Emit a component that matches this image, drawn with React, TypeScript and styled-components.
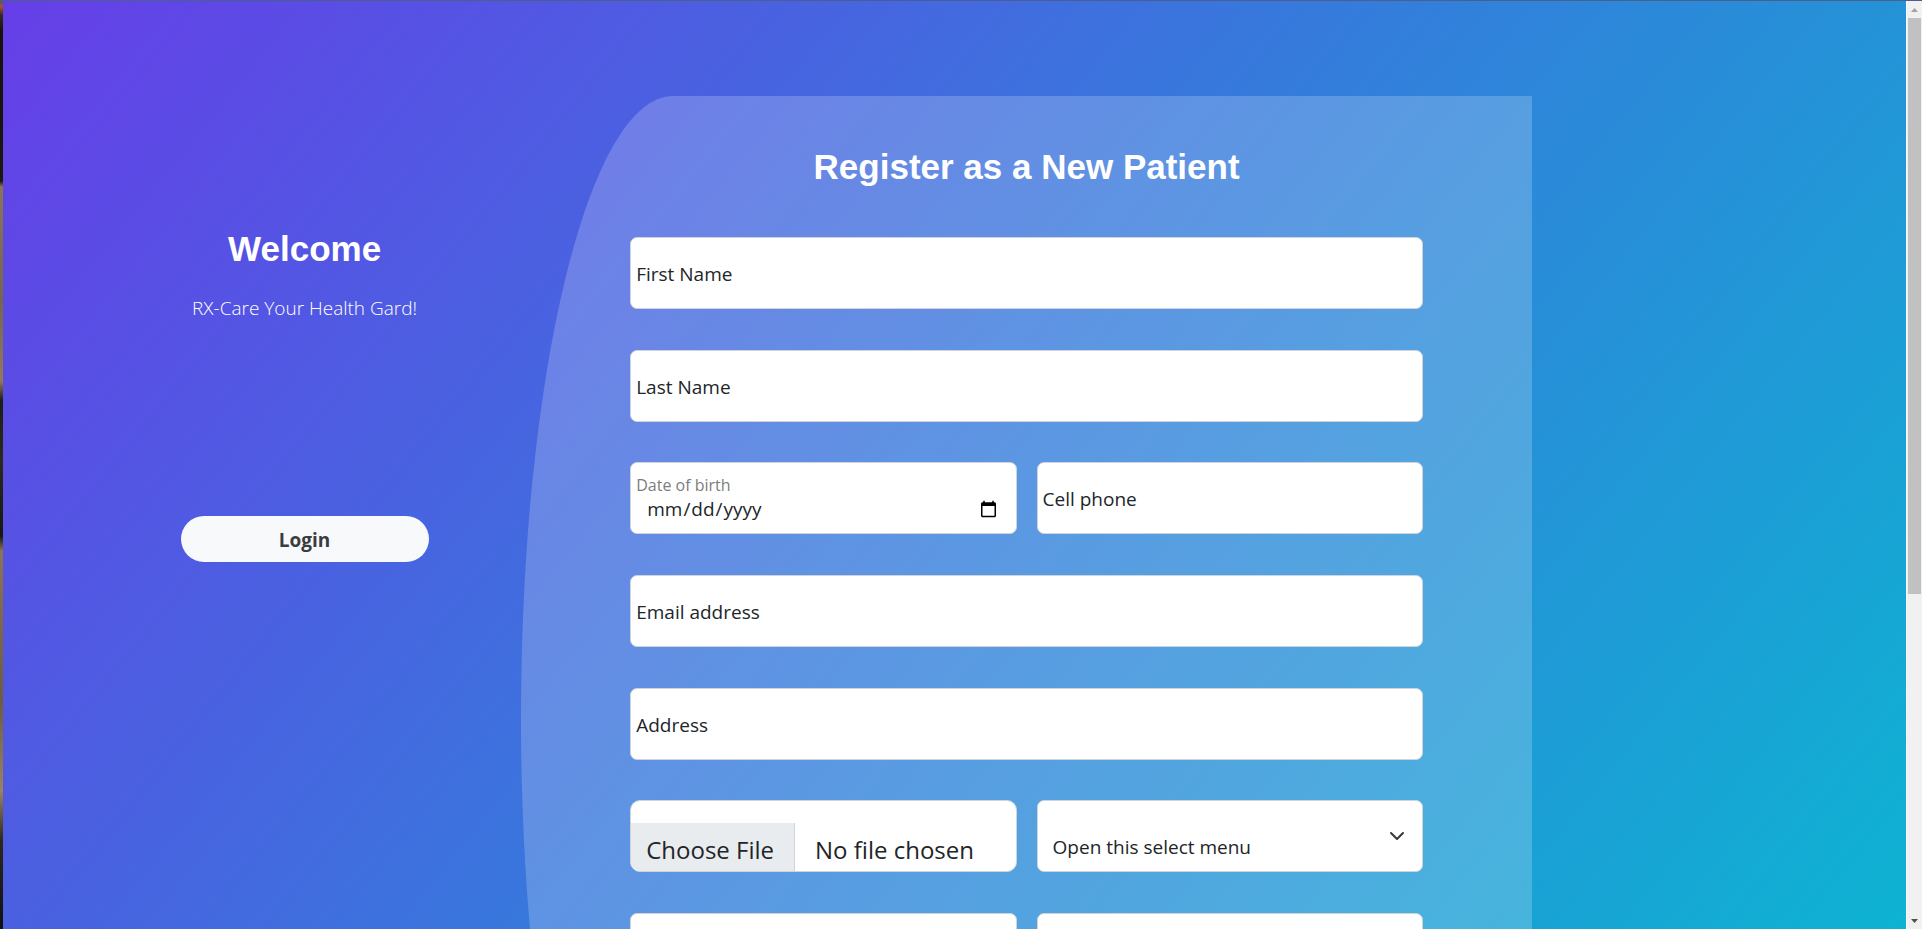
import React from "react";
import styled, { createGlobalStyle } from "styled-components";

const GlobalStyle = createGlobalStyle`
  *, *::before, *::after { box-sizing: border-box; }
  body {
    margin: 0;
    font-family: "Open Sans", "Noto Sans", sans-serif;
    font-size: 19px;
    color: #212529;
  }
  input, select, button { font-family: inherit; color: inherit; }
`;

const Window = styled.div`
  display: grid;
  grid-template-columns: 3px minmax(0, 1fr) 16px;
  height: 100vh;
  border-top: 1px solid #4c5f8c;
  overflow: hidden;
`;

const Backdrop = styled.div`
  background: linear-gradient(
    #55565c 0, #a8532c 6px, #3a2a1a 14px, #15120c 30px, #1c1710 180px,
    #8a7456 186px, #75664a 300px, #927a58 380px, #1d1e14 400px, #2b2a1c 460px,
    #17180f 535px, #8d7350 550px, #6d5c40 700px, #9b8260 790px, #2c281c 840px, #111 100%
  );
`;

const Viewport = styled.main`
  overflow-y: auto;
  scrollbar-width: none;
`;

const Page = styled.div`
  display: grid;
  grid-template-columns: 3fr 7fr;
  padding: 95px 374px 95px 85px;
  background: linear-gradient(129deg, #663ee8 0%, #367adc 43%, #01c4cf 100%);
`;

const Intro = styled.section`
  display: flex;
  flex-direction: column;
  align-items: center;
  padding-top: 130px;
  color: #fff;
`;

const Heading = styled.h1`
  margin: 0;
  font: bold 35px/46px "Liberation Sans", Arial, sans-serif;
  color: #fff;
  text-align: center;
`;

const Tagline = styled.p`
  margin: 22px 0 0;
  font-size: 19px;
  font-weight: 300;
  line-height: 28px;
`;

const LoginButton = styled.button`
  width: 248px;
  height: 46px;
  margin-top: 194px;
  padding: 2px 0 0;
  border: 0;
  border-radius: 24px;
  background: #f8f9fa;
  color: #383d41;
  font-size: 19px;
  font-weight: 700;
`;

const Panel = styled.section`
  min-height: 1244px;
  padding: 48px 109px;
  border-radius: 15% 0 0 15% / 50% 0 0 50%;
  background: rgba(255, 255, 255, 0.2);
`;

const Form = styled.form`
  display: flex;
  flex-direction: column;
  justify-content: space-between;
  height: 748px;
  margin-top: 47px;
`;

const Row = styled.div`
  display: grid;
  grid-auto-flow: column;
  grid-auto-columns: minmax(0, 1fr);
  gap: 20px;
`;

const Field = styled.div`
  display: grid;
  grid-template: 72px / minmax(0, 1fr);
  > * { grid-area: 1 / 1; }
`;

const Control = styled.input`
  width: 100%;
  height: 100%;
  padding: 28px 16px 6px 15px;
  border: 1px solid #ced4da;
  border-radius: 7px;
  background: #fff;
  font-size: 19px;
`;

const FileControl = styled(Control)`
  padding: 22px 16px 0 15px;
  border-radius: 10px;
  font-size: 24px;
  line-height: 36px;
  overflow: hidden;

  &::file-selector-button {
    margin: 0 20px 0 -15px;
    padding: 9px 20px 8px 15px;
    border: 0;
    border-right: 1px solid #ced4da;
    background: #e9ecef;
    color: inherit;
    font: inherit;
  }
`;

const Label = styled.label<{ $raised?: boolean }>`
  align-self: ${(p) => (p.$raised ? "start" : "center")};
  justify-self: start;
  padding: ${(p) => (p.$raised ? "10px 0 0 6px" : "2px 0 0 6px")};
  font-size: ${(p) => (p.$raised ? 16 : 19)}px;
  line-height: 26px;
  opacity: ${(p) => (p.$raised ? 0.6 : 1)};
  pointer-events: none;
`;

const Select = styled.select`
  width: 100%;
  height: 100%;
  padding: 26px 48px 4px 15px;
  border: 1px solid #ced4da;
  border-radius: 7px;
  background: #fff;
  font-size: 19px;
  appearance: none;
`;

const Chevron = styled.svg`
  align-self: center;
  justify-self: end;
  width: 16px;
  height: 16px;
  margin-right: 18px;
  pointer-events: none;
`;

const Scrollbar = styled.div`
  display: flex;
  flex-direction: column;
  padding-left: 1px;
  border-left: 1px solid #fff;
  background: #f1f1f1;
`;

const Arrow = styled.svg`
  display: block;
  width: 13px;
  height: 17px;
  flex: none;
`;

const Thumb = styled.div`
  flex: 577;
  width: 13px;
  background: #c1c1c1;
`;

const Track = styled.div`
  flex: 318;
`;

function TextField({ id, label, type = "text" }: { id: string; label: string; type?: string }) {
  return (
    <Field>
      <Control id={id} type={type} />
      <Label htmlFor={id} $raised={type === "date"}>{label}</Label>
    </Field>
  );
}

export default function App() {
  return (
    <>
      <GlobalStyle />
      <Window>
        <Backdrop />
        <Viewport>
          <Page>
            <Intro>
              <Heading>Welcome</Heading>
              <Tagline>RX-Care Your Health Gard!</Tagline>
              <LoginButton type="button">Login</LoginButton>
            </Intro>
            <Panel>
              <Heading as="h2">Register as a New Patient</Heading>
              <Form>
                <Row><TextField id="first-name" label="First Name" /></Row>
                <Row><TextField id="last-name" label="Last Name" /></Row>
                <Row>
                  <TextField id="birth" label="Date of birth" type="date" />
                  <TextField id="phone" label="Cell phone" type="tel" />
                </Row>
                <Row><TextField id="email" label="Email address" type="email" /></Row>
                <Row><TextField id="address" label="Address" /></Row>
                <Row>
                  <Field>
                    <FileControl type="file" aria-label="Choose File" />
                  </Field>
                  <Field>
                    <Select aria-label="Open this select menu">
                      <option>Open this select menu</option>
                    </Select>
                    <Chevron viewBox="0 0 16 16" fill="none" stroke="#343a40" strokeWidth="2" strokeLinecap="round" strokeLinejoin="round">
                      <path d="m2 5 6 6 6-6" />
                    </Chevron>
                  </Field>
                </Row>
                <Row>
                  <Field><Control type="password" aria-label="Password" /></Field>
                  <Field><Control type="password" aria-label="Confirm password" /></Field>
                </Row>
              </Form>
            </Panel>
          </Page>
        </Viewport>
        <Scrollbar aria-hidden="true">
          <Arrow viewBox="0 0 13 17"><path d="M3 11 6.500 7 10 11z" fill="#a3a3a3" /></Arrow>
          <Thumb />
          <Track />
          <Arrow viewBox="0 0 13 17"><path d="M3 7h7L6.500 11z" fill="#505050" /></Arrow>
        </Scrollbar>
      </Window>
    </>
  );
}
